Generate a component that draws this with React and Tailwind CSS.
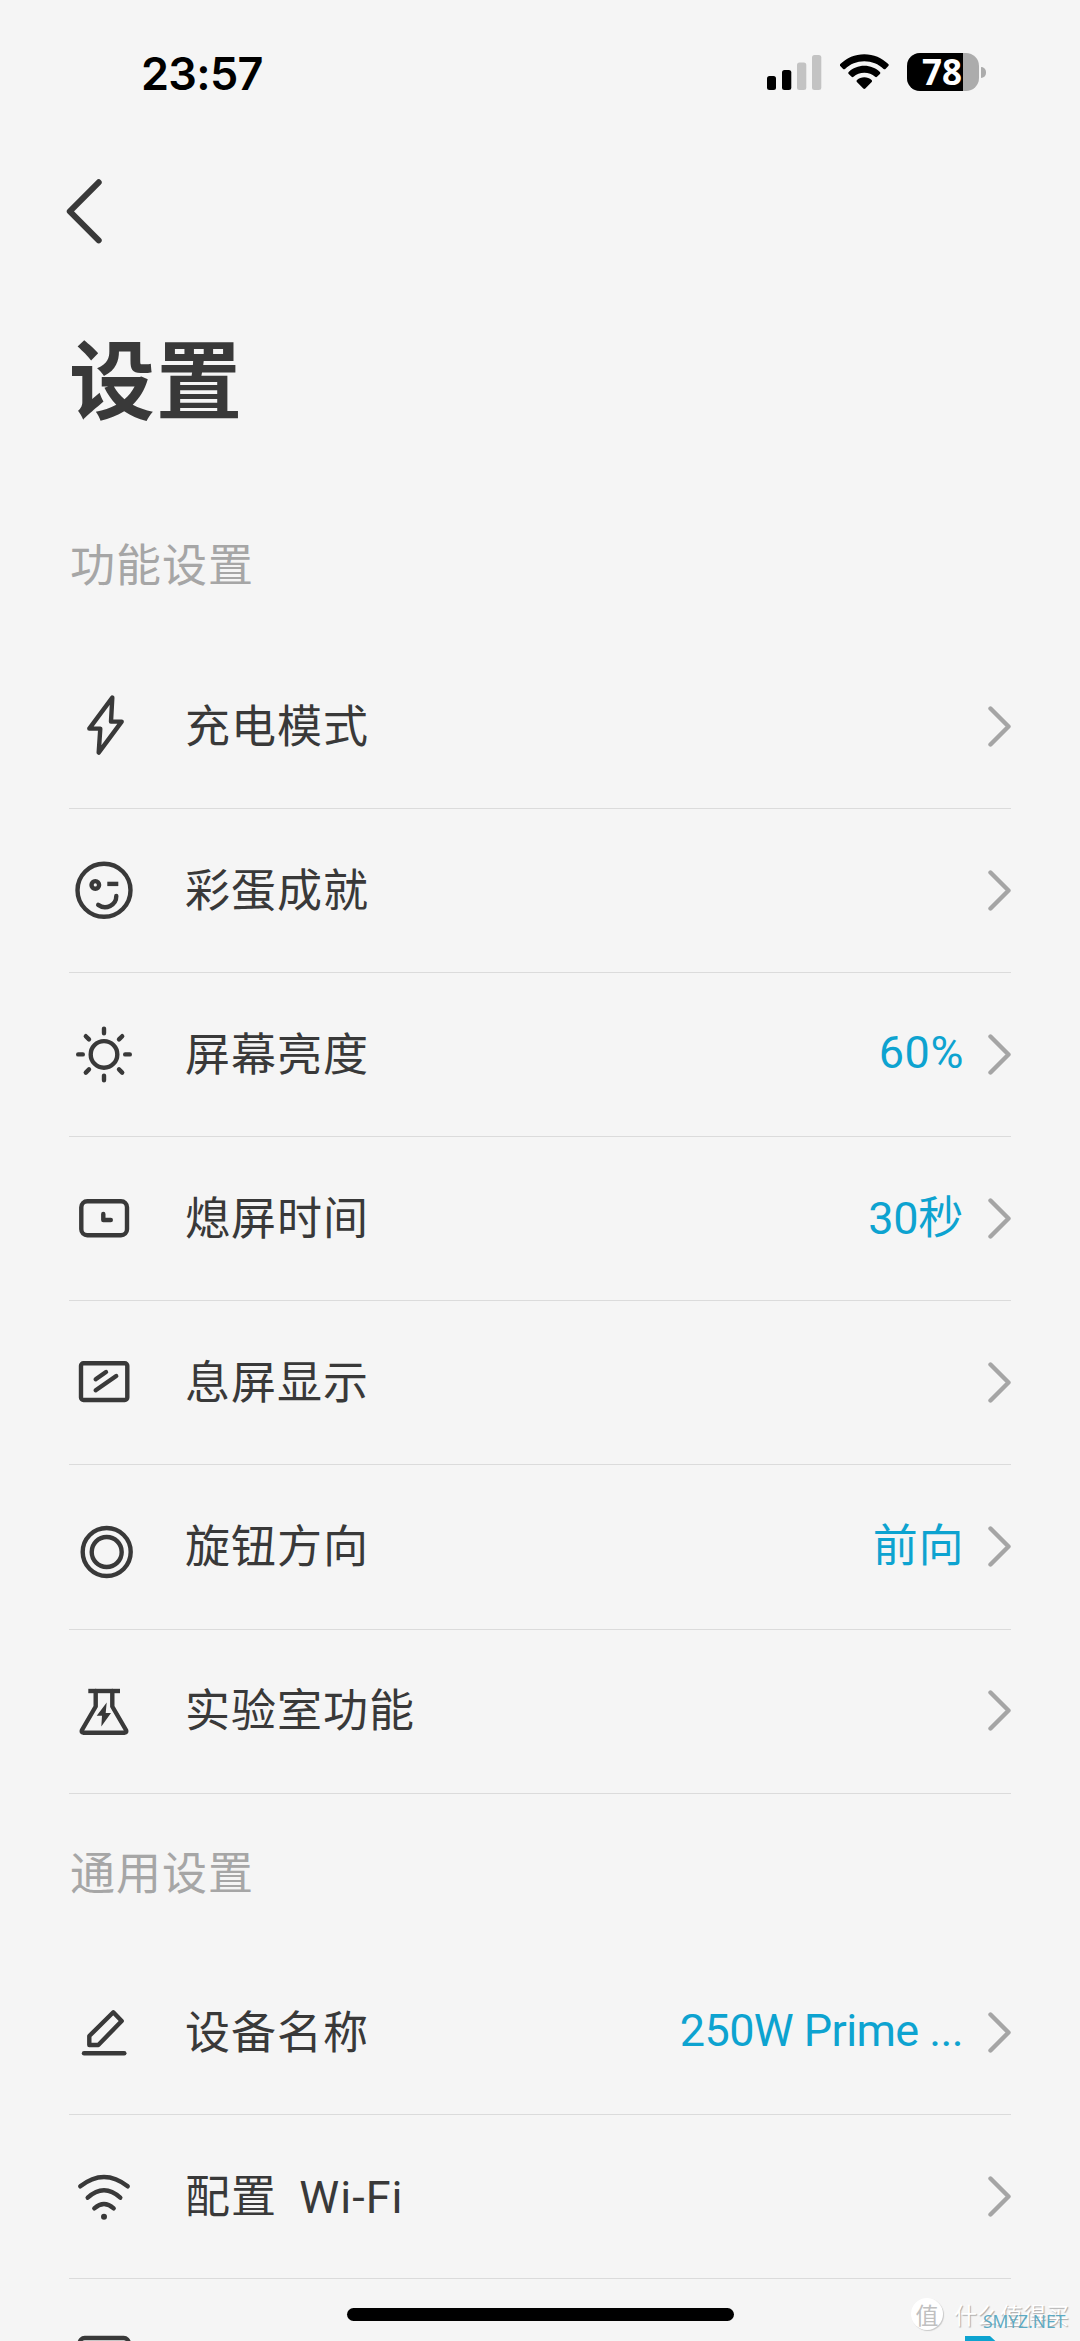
import React from "react";

const ICONS = {
  bolt: (
    <path d="M42.3 4.6 41 28.6h10.7l-23 31 1.6-24h-11z" />
  ),
  wink: (
    <>
      <circle cx="34" cy="33.2" r="26.5" />
      <circle cx="25.3" cy="27.9" r="3.8" />
      <path d="M37.3 26.9h11" strokeLinecap="butt" />
      <path d="M28.2 47.9C36 53.5 46.3 48 46.3 39" />
    </>
  ),
  sun: (
    <>
      <circle cx="34" cy="33.4" r="13.3" />
      <path d="M34 7.6v4.6M34 54.6v4.6M8.2 33.4h4.6M55.2 33.4h4.6M15.8 15.2l3.2 3.2M49 48.4l3.2 3.2M15.8 51.6l3.2-3.2M49 18.4l3.2-3.2" />
    </>
  ),
  timer: (
    <>
      <rect x="11.3" y="16.3" width="45.7" height="34" rx="6" />
      <path d="M33.3 29v6h7.5" />
    </>
  ),
  screen: (
    <>
      <rect x="11" y="14.3" width="46.3" height="36.7" rx="2.5" />
      <path d="M25.7 30.3 36 23M25.7 41.3 46.2 27" />
    </>
  ),
  knob: (
    <>
      <circle cx="36.7" cy="39" r="24" />
      <circle cx="36.7" cy="39" r="15" />
    </>
  ),
  flask: (
    <>
      <path d="M18.3 14H50" strokeLinecap="butt" />
      <path d="M25.7 14v15.5L12 53q-1.2 2.7 1.5 2.7h41q2.7 0 1.5-2.7L42.3 29.5V14" />
      <path d="m36.7 25.4-10 13.3H32l-.7 10.7L41 36h-5.3z" fill="currentColor" stroke="none" />
    </>
  ),
  pencil: (
    <>
      <path d="m43.3 13.3 8.4 8.7-23.4 24h-9v-9z" />
      <path d="M14 54.3h40.3" />
    </>
  ),
  wifi: (
    <>
      <path d="M10.3 23.3q23.7-18.6 47.4 0M17.7 34.7q16.3-14.8 32.6 0M24.3 45.3q9.7-8.6 19.4 0" />
      <circle cx="34" cy="53.7" r="3" fill="currentColor" stroke="none" />
    </>
  ),
  panel: <rect x="10.7" y="11" width="49" height="40" rx="5" />,
};

const VALUE_STYLES = {
  latin: "mr-[22px] -translate-y-[2px] tracking-[0.6px]",
  mixed: "mr-[23px] tracking-[-0.3px]",
  cjk: "mr-[22px] tracking-[0.6px]",
  long: "mr-[23px] -translate-y-[2px] tracking-[-0.6px]",
};

const FEATURES = [
  { icon: "bolt", label: "充电模式" },
  { icon: "wink", label: "彩蛋成就" },
  { icon: "sun", label: "屏幕亮度", value: "60%", kind: "latin" },
  { icon: "timer", label: "熄屏时间", value: "30秒", kind: "mixed" },
  { icon: "screen", label: "息屏显示" },
  { icon: "knob", label: "旋钮方向", value: "前向", kind: "cjk" },
  { icon: "flask", label: "实验室功能" },
];

const GENERAL = [
  { icon: "pencil", label: "设备名称", value: "250W Prime ...", kind: "long" },
  { icon: "wifi", label: "配置  Wi-Fi" },
];

function StatusBar() {
  return (
    <header className="flex h-[146px] shrink-0 items-start justify-between pl-[141px] pr-[94px] pt-[52px]">
      <span className="font-['Inter'] text-[45px] font-semibold leading-[43px] tracking-[-0.7px] text-black">23:57</span>
      <div className="flex items-start">
        <svg className="h-[43px] w-[56px]" viewBox="0 0 56 43">
          <rect x="1" y="24" width="9" height="14" rx="2.5" />
          <rect x="16" y="18" width="9.3" height="20" rx="2.5" />
          <rect x="31" y="10.5" width="9.3" height="27.5" rx="2.5" fill="#c3c3c3" />
          <rect x="46" y="3" width="9.3" height="35" rx="2.5" fill="#c3c3c3" />
        </svg>
        <svg className="ml-[18px] h-[43px] w-[50px]" viewBox="0 0 50 43">
          <path d="M24.3 2.3c9.3 0 17.7 3.7 24 9.8.6.6.6 1.4 0 2l-2.8 2.8c-.5.5-1.3.5-1.9 0C38.5 12.1 31.7 9.3 24.3 9.3S10.1 12.1 5 16.9c-.6.5-1.4.5-1.9 0L.3 14.1c-.6-.6-.6-1.4 0-2 6.3-6.1 14.7-9.8 24-9.8z" />
          <path d="M24.3 13.8c6 0 11.5 2.3 15.6 6.1.6.6.6 1.4 0 2L37 24.8c-.5.5-1.3.5-1.9 0-2.9-2.6-6.7-4.1-10.8-4.1s-7.9 1.5-10.8 4.1c-.6.5-1.4.5-1.9 0l-2.9-2.9c-.6-.6-.6-1.4 0-2 4.1-3.8 9.6-6.1 15.6-6.1z" />
          <path d="M24.3 25.3c2.8 0 5.3 1 7.3 2.7.6.5.6 1.3.1 1.9l-6.4 6.6c-.6.6-1.4.6-2 0l-6.4-6.6c-.5-.6-.5-1.4.1-1.9 2-1.7 4.5-2.7 7.3-2.7z" />
        </svg>
        <div className="ml-[17px] mt-px flex h-[38px] w-[72px] rounded-[13px] bg-[#acacac]">
          <div className="flex h-full w-[56px] items-center justify-end rounded-l-[13px] bg-black pr-px font-['Open_Sans'] text-[35px] font-bold leading-[38px] text-white">
            78
          </div>
        </div>
        <span className="ml-[2px] mt-[15px] h-[11px] w-[5px] rounded-r-full bg-[#acacac]" />
      </div>
    </header>
  );
}

function Row({ icon, label, value, kind }) {
  return (
    <li className="flex h-[164.1px] items-center border-b border-[#dbdbdb]">
      <svg className="ml-px h-[68px] w-[68px] shrink-0" viewBox="0 0 68 68" fill="none" stroke="currentColor"
        strokeWidth="4.4" strokeLinecap="round" strokeLinejoin="round">
        {ICONS[icon]}
      </svg>
      <span className="ml-[47px] flex-1 translate-y-px whitespace-pre text-[45px] leading-[64px] tracking-[1px] [word-spacing:-1px]">{label}</span>
      {value && (
        <span className={`text-[45px] leading-[64px] text-[#0da3d0] ${VALUE_STYLES[kind]}`}>{value}</span>
      )}
      <svg className="h-[44px] w-[25px] shrink-0" viewBox="0 0 25 44" fill="none" stroke="#a5a5a5"
        strokeWidth="4.4" strokeLinecap="round" strokeLinejoin="round">
        <path d="m4.500 3.500 18 18-18 18" />
      </svg>
    </li>
  );
}

function SectionTitle({ children }) {
  return <h2 className="pl-px text-[45px] font-normal leading-[64px] tracking-[1px] text-[#a6a6a6]">{children}</h2>;
}

export default function App() {
  return (
    <div className="relative flex h-[2341px] w-[1080px] flex-col overflow-hidden bg-[#f5f5f5] font-['Roboto','Noto_Sans_CJK_SC',sans-serif] text-[#393939]">
      <StatusBar />

      <nav className="flex h-[130px] shrink-0 items-center pl-[64px]">
        <svg className="h-[72px] w-[40px]" viewBox="0 0 40 72" fill="none" stroke="currentColor"
          strokeWidth="6" strokeLinecap="round" strokeLinejoin="round">
          <path d="M34.7 7.3 5.8 36.4l28.9 29" />
        </svg>
      </nav>

      <main className="shrink-0 px-[69px]">
        <h1 className="h-[259px] pt-[48px] text-[86px] font-bold leading-[120px] tracking-[1px]">设置</h1>
        <div className="h-[110px]">
          <SectionTitle>功能设置</SectionTitle>
        </div>
        <ul>
          {FEATURES.map((item) => (
            <Row key={item.label} {...item} />
          ))}
        </ul>
        <div className="h-[157.6px] pt-[49px]">
          <SectionTitle>通用设置</SectionTitle>
        </div>
        <ul>
          {GENERAL.map((item) => (
            <Row key={item.label} {...item} />
          ))}
          <li className="flex h-[164px] items-center justify-between">
            <svg className="h-[68px] w-[68px]" viewBox="0 0 68 68" fill="none" stroke="currentColor" strokeWidth="4.4">
              {ICONS.panel}
            </svg>
            <svg className="mr-[6px] h-[68px] w-[40px]" viewBox="0 0 40 68" fill="none" stroke="#0da3d0" strokeWidth="5">
              <path d="M2.5 60V11.5H24L31 18v42z" />
            </svg>
          </li>
        </ul>
      </main>

      <div className="absolute left-[346.5px] top-[2308px] h-[13px] w-[387px] rounded-full bg-black" />

      <div className="absolute left-[911px] top-[2298px] flex items-center font-['Noto_Sans_CJK_SC',sans-serif]">
        <span className="flex h-8 w-8 items-center justify-center rounded-full bg-white text-[23px] leading-none text-[#c0c0c0] shadow-[1px_1px_1px_#c8c8c8]">值</span>
        <span className="ml-[11px] whitespace-nowrap text-[23px] leading-8 text-white [text-shadow:1px_1px_1px_#aaa]">什么值得买</span>
      </div>
      <span className="absolute left-[983px] top-[2310px] font-['Open_Sans'] text-[17.5px] leading-[22px] text-[#5baac4]">SMYZ.NET</span>
    </div>
  );
}
